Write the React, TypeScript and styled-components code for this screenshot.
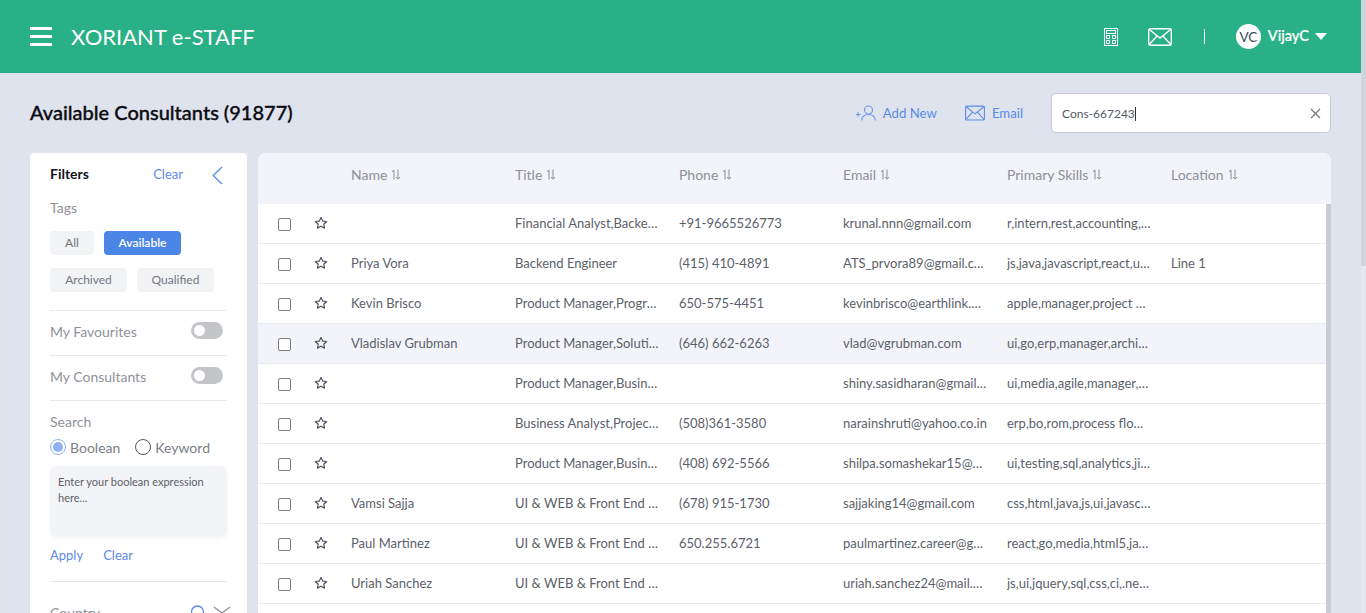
import React from "react";
import styled, { createGlobalStyle } from "styled-components";

const Global = createGlobalStyle`
  html, body { margin: 0; padding: 0; height: 100%; overflow: hidden; }
  body { font-family: "Lato", "Liberation Sans", sans-serif; background: #dfe3ee; }
  #root { height: 613px; }
  * { box-sizing: border-box; }
`;

const Shell = styled.div`display: flex; height: 613px; width: 1366px; overflow: hidden;`;
const Page = styled.div`width: 1361px; flex: none; display: flex; flex-direction: column;`;
const PageScroll = styled.div`width: 5px; flex: none; background: #e6e7ef; display: flex; flex-direction: column;`;
const PageThumb = styled.div`height: 266px; background: #d0d2de;`;

const Header = styled.header`
  height: 73px; flex: none; background: #2ab086; display: flex; align-items: center; padding: 0 34px 0 30px; color: #fff;
`;
const Burger = styled.div`
  width: 22px; height: 19px; display: flex; flex-direction: column; justify-content: space-between; margin-right: 19px;
  span { display: block; height: 3px; background: #fff; }
`;
const Brand = styled.div`font-size: 22px; line-height: 28px; flex: 1; letter-spacing: 0;`;
const HeadIcon = styled.svg`display: block; flex: none;`;
const CalcIcon = styled(HeadIcon)`margin-right: 30px;`;
const Sep = styled.div`width: 1px; height: 15px; background: #fff; margin: 0 31px 0 32px;`;
const Avatar = styled.div`
  width: 25px; height: 25px; border-radius: 50%; background: #fff; color: #3e4a5e; font-size: 13.5px;
  display: flex; align-items: center; justify-content: center; margin-right: 7px;
`;
const UserName = styled.div`font-size: 14.5px; font-weight: 500; margin-right: 6px; padding-bottom: 2px; -webkit-text-stroke: .2px #fff;`;
const Caret = styled.div`width: 0; height: 0; border-left: 6.5px solid transparent; border-right: 6.5px solid transparent; border-top: 7px solid #fff;`;

const TitleBar = styled.div`height: 80px; flex: none; display: flex; align-items: center; padding: 0 30px; `;
const PageTitle = styled.h1`
  margin: -2px 0 0; flex: 1; font-size: 20px; font-weight: 500; color: #0c0c12; line-height: 26px; -webkit-text-stroke: .35px #0c0c12;
`;
const ActionLink = styled.a`
  display: flex; align-items: center; gap: 7px; color: #5a8be6; font-size: 13.2px; margin-right: 28px; padding-bottom: 1px;
`;
const SearchBox = styled.div`
  width: 280px; height: 40px; background: #fff; border: 1px solid #c8cad2; border-radius: 5px;
  display: flex; align-items: center; padding: 0 9px 0 10px; font-size: 12px; color: #555a66; justify-content: space-between;
`;
const Cursor = styled.span`display: inline-block; width: 1px; height: 14px; background: #333; vertical-align: -3px;`;

const Content = styled.div`flex: 1; min-height: 0; display: flex; gap: 11px; padding: 0 30px; overflow: hidden;`;
const Filters = styled.aside`
  width: 217px; flex: none; background: #fff; border-radius: 4px 4px 0 0; padding: 11px 20px 0; overflow: hidden;
`;
const FilterHead = styled.div`display: flex; align-items: center; height: 20px; justify-content: space-between;`;
const FilterTitle = styled.span`font-size: 14px; font-weight: 700; color: #14141c; margin-top: -2px;`;
const Right = styled.div`display: flex; align-items: center;`;
const BlueLink = styled.span`color: #6189e6; font-size: 13px; font-weight: 400;`;
const CollapseIcon = styled.svg`margin: 3px 4px 0 29px;`;
const CountryIcon = styled.svg`margin-right: -4px;`;
const Label = styled.div`font-size: 14px; line-height: 18px; color: #8f929a;`;
const TagLabel = styled(Label)`margin-top: 15px;`;
const Chips = styled.div`display: flex; flex-wrap: wrap; gap: 13px 10px; margin-top: 14px; padding-bottom: 18px; border-bottom: 1px solid #e8e9ec;`;
const Chip = styled.span<{ $w: number; $on?: boolean }>`
  width: ${p => p.$w}px; height: 24px; border-radius: 4px; font-size: 12px; padding-bottom: 2px;
  display: flex; align-items: center; justify-content: center;
  background: ${p => (p.$on ? "#4b85e6" : "#f2f3f5")}; color: ${p => (p.$on ? "#fff" : "#75757f")};
  font-weight: ${p => (p.$on ? 600 : 400)};
`;
const ToggleRow = styled.div`
  height: 45px; display: flex; align-items: center; justify-content: space-between; border-bottom: 1px solid #e8e9ec;
  padding: 0 4px 3px 0; font-size: 14px; color: #8f929a;
`;
const Toggle = styled.div`
  width: 32px; height: 17px; border-radius: 9px; background: #c4c5c9; position: relative; margin-top: -2px;
  &::after { content: ""; position: absolute; left: 3px; top: 3px; width: 11px; height: 11px; border-radius: 50%; background: #fff; }
`;
const SearchLabel = styled(Label)`margin-top: 12px;`;
const Radios = styled.div`display: flex; align-items: center; margin-top: 7px; height: 18px; font-size: 14px; color: #7c7e86;`;
const Radio = styled.span<{ $on?: boolean }>`
  width: 16px; height: 16px; border-radius: 50%; margin-right: 4px; flex: none; display: flex; align-items: center; justify-content: center;
  border: 1px solid ${p => (p.$on ? "#8db1f0" : "#555")}; 
  &::after { content: ""; width: 10px; height: 10px; border-radius: 50%; background: ${p => (p.$on ? "#8db1f0" : "transparent")}; }
`;
const RadioText = styled.span`margin-right: 15px;`;
const Area = styled.div`
  margin-top: 10px; height: 71px; border-radius: 7px; background: #f3f4f8; padding: 8px 8px; font-size: 11px; line-height: 16px; color: #5e606a;
  box-shadow: 0 2px 4px rgba(0,0,0,.04);
`;
const ApplyRow = styled.div`display: flex; gap: 20px; margin-top: 10px; height: 17px; line-height: 17px; padding-bottom: 0;`;
const Divider = styled.div`height: 1px; background: #e8e9ec; margin-top: 17px;`;
const CountryRow = styled.div`display: flex; justify-content: space-between; align-items: flex-start; margin-top: 22px; height: 18px; font-size: 14px; color: #8f929a;`;

const Table = styled.section`flex: 1; min-width: 0; display: flex; flex-direction: column; background: #fff; border-radius: 8px 8px 0 0; overflow: hidden;`;
const HeadRow = styled.div`
  flex: none; height: 51px; background: #f3f4f9; display: grid; grid-template-columns: 93px repeat(6, 164px); align-items: center; padding-bottom: 9px;
`;
const HeadCell = styled.div`font-size: 14px; color: #8d9098; display: flex; align-items: center; gap: 4px;`;
const Body = styled.div`flex: 1; min-height: 0; display: flex; overflow: hidden;`;
const Rows = styled.div`flex: 1; min-width: 0;`;
const TableScroll = styled.div`width: 5px; flex: none; background: #cacbd9;`;
const Row = styled.div<{ $hover?: boolean }>`
  height: 40px; display: grid; grid-template-columns: 93px repeat(6, 164px); align-items: center;
  border-bottom: 1px solid #e8e9ec; background: ${p => (p.$hover ? "#f3f4f9" : "#fff")};
`;
const Controls = styled.div`display: flex; align-items: center; padding-left: 20px; gap: 23px;`;
const Check = styled.span`width: 13px; height: 13px; border: 1px solid #7a7c82; border-radius: 2px; background: #fff; margin-top: 2px; flex: none;`;
const StarIcon = styled.svg`margin-top: -1px;`;
const Cell = styled.div`
  font-size: 13px; color: #5c5f6a; white-space: nowrap; overflow: hidden; text-overflow: ellipsis; padding: 0 20px 2px 0;
`;

const MailIcon = ({ w, h, c, sw = 1.1 }: { w: number; h: number; c: string; sw?: number }) => (
  <HeadIcon width={w} height={h} viewBox="0 0 24 18" fill="none" stroke={c} strokeWidth={sw}>
    <rect x=".7" y=".7" width="22.6" height="16.6" rx="1.5" />
    <path d="M1 1.2 12 10l11-8.8M1 16.8 9 8M23 16.8 15 8" />
  </HeadIcon>
);

const Star = () => (
  <StarIcon width="14" height="14" viewBox="0 0 24 24" fill="none" stroke="#4c4f5a" strokeWidth="2" strokeLinejoin="round">
    <path d="m12 2.5 2.9 6.2 6.8.8-5 4.6 1.3 6.7L12 17.5l-6 3.3 1.3-6.7-5-4.6 6.8-.8z" />
  </StarIcon>
);

const Sort = () => (
  <svg width="10" height="11" viewBox="0 0 10 11" fill="none" stroke="#8d9098" strokeWidth="1">
    <path d="M3 10.5V1M1 3l2-2.2M7 .5V10M5 8l2 2.2L9 8" />
  </svg>
);

const columns = ["Name", "Title", "Phone", "Email", "Primary Skills", "Location"];
const rows = [
  ["", "Financial Analyst,Backend Engineer", "+91-9665526773", "krunal.nnn@gmail.com", "r,intern,rest,accounting,excel", ""],
  ["Priya Vora", "Backend Engineer", "(415) 410-4891", "ATS_prvora89@gmail.com", "js,java,javascript,react,ui,css", "Line 1"],
  ["Kevin Brisco", "Product Manager,Program Lead", "650-575-4451", "kevinbrisco@earthlink.net", "apple,manager,project management", ""],
  ["Vladislav Grubman", "Product Manager,Solution Lead", "(646) 662-6263", "vlad@vgrubman.com", "ui,go,erp,manager,architecture", ""],
  ["", "Product Manager,Business Lead", "", "shiny.sasidharan@gmail.com", "ui,media,agile,manager,scrum", ""],
  ["", "Business Analyst,Project Lead", "(508)361-3580", "narainshruti@yahoo.co.in", "erp,bo,rom,process flow,agile", ""],
  ["", "Product Manager,Business Lead", "(408) 692-5566", "shilpa.somashekar15@gmail.com", "ui,testing,sql,analytics,jira,go", ""],
  ["Vamsi Sajja", "UI & WEB & Front End Developer", "(678) 915-1730", "sajjaking14@gmail.com", "css,html,java,js,ui,javascript", ""],
  ["Paul Martinez", "UI & WEB & Front End Developer", "650.255.6721", "paulmartinez.career@gmail.com", "react,go,media,html5,java,css", ""],
  ["Uriah Sanchez", "UI & WEB & Front End Developer", "", "uriah.sanchez24@mail.com", "js,ui,jquery,sql,css,ci,.net,java", ""],
];

export default function App() {
  return (
    <Shell>
      <Global />
      <Page>
        <Header>
          <Burger><span /><span /><span /></Burger>
          <Brand>XORIANT e-STAFF</Brand>
          <CalcIcon width="14" height="18" viewBox="0 0 14 18" fill="none" stroke="#fff" strokeWidth="1">
            <rect x=".5" y=".5" width="13" height="17" />
            <rect x="2.5" y="2.5" width="9" height="3" />
            <path d="M2.5 7.5h3v3h-3zM8.5 7.5h3v3h-3zM2.5 12.5h3v3h-3zM8.5 12.5h3v3h-3z" />
          </CalcIcon>
          <MailIcon w={24} h={18} c="#fff" sw={1.4} />
          <Sep />
          <Avatar>VC</Avatar>
          <UserName>VijayC</UserName>
          <Caret />
        </Header>
        <TitleBar>
          <PageTitle>Available Consultants (91877)</PageTitle>
          <ActionLink>
            <svg width="20" height="16" viewBox="0 0 20 16" fill="none" stroke="#6f97e6" strokeWidth="1.100">
              <path d="M0 9.500h4.500M2.200 7.200v4.600" />
              <circle cx="12.500" cy="5" r="4" />
              <path d="M5.500 15.500c.5-3.500 3-6 7-6s6.500 2.500 7 6" />
            </svg>
            Add New
          </ActionLink>
          <ActionLink>
            <MailIcon w={20} h={16} c="#5a8be6" sw={1.3} />
            Email
          </ActionLink>
          <SearchBox>
            <span>Cons-667243<Cursor /></span>
            <svg width="11" height="11" viewBox="0 0 11 11" stroke="#777" strokeWidth="1.2"><path d="m1 1 9 9M10 1l-9 9" /></svg>
          </SearchBox>
        </TitleBar>
        <Content>
          <Filters>
            <FilterHead>
              <FilterTitle>Filters</FilterTitle>
              <Right>
                <BlueLink>Clear</BlueLink>
                <CollapseIcon width="11" height="19" viewBox="0 0 11 19" fill="none" stroke="#5a8be6" strokeWidth="1.300">
                  <path d="M10 1 1.200 9.500 10 18" />
                </CollapseIcon>
              </Right>
            </FilterHead>
            <TagLabel>Tags</TagLabel>
            <Chips>
              <Chip $w={44}>All</Chip>
              <Chip $w={77} $on>Available</Chip>
              <Chip $w={77}>Archived</Chip>
              <Chip $w={77}>Qualified</Chip>
            </Chips>
            <ToggleRow>My Favourites<Toggle /></ToggleRow>
            <ToggleRow>My Consultants<Toggle /></ToggleRow>
            <SearchLabel>Search</SearchLabel>
            <Radios>
              <Radio $on /><RadioText>Boolean</RadioText>
              <Radio /><RadioText>Keyword</RadioText>
            </Radios>
            <Area>Enter your boolean expression here...</Area>
            <ApplyRow><BlueLink>Apply</BlueLink><BlueLink>Clear</BlueLink></ApplyRow>
            <Divider />
            <CountryRow>
              Country
              <Right>
                <CountryIcon width="40" height="16" viewBox="0 0 40 16" fill="none" stroke="#5a8be6" strokeWidth="1.300">
                  <circle cx="6.500" cy="8" r="6" />
                  <path d="m23 3 8 6 8-6" stroke="#8d9098" />
                </CountryIcon>
              </Right>
            </CountryRow>
          </Filters>
          <Table>
            <HeadRow>
              <span />
              {columns.map(c => (
                <HeadCell key={c}>{c} <Sort /></HeadCell>
              ))}
            </HeadRow>
            <Body>
              <Rows>
                {rows.map((r, i) => (
                  <Row key={i} $hover={i === 3}>
                    <Controls><Check /><Star /></Controls>
                    {r.map((v, j) => <Cell key={j}>{v}</Cell>)}
                  </Row>
                ))}
              </Rows>
              <TableScroll />
            </Body>
          </Table>
        </Content>
      </Page>
      <PageScroll><PageThumb /></PageScroll>
    </Shell>
  );
}
